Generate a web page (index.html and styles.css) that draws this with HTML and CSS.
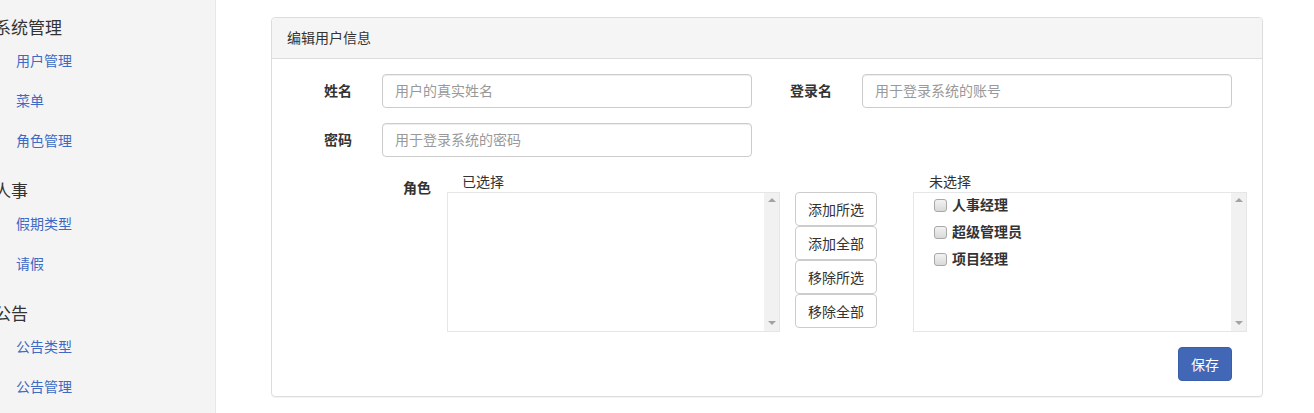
FILE: index.html
```html
<!DOCTYPE html>
<html lang="zh-CN">
<head>
<meta charset="utf-8">
<title>编辑用户信息</title>
<link rel="stylesheet" href="styles.css">
</head>
<body>
<div class="layout">
  <aside class="sidebar">
    <div class="group">
      <div class="group-title">系统管理</div>
      <a class="nav-link" href="#">用户管理</a>
      <a class="nav-link" href="#">菜单</a>
      <a class="nav-link" href="#">角色管理</a>
    </div>
    <div class="group">
      <div class="group-title">人事</div>
      <a class="nav-link" href="#">假期类型</a>
      <a class="nav-link" href="#">请假</a>
    </div>
    <div class="group">
      <div class="group-title">公告</div>
      <a class="nav-link" href="#">公告类型</a>
      <a class="nav-link" href="#">公告管理</a>
    </div>
  </aside>
  <main class="main">
    <section class="panel">
      <div class="panel-heading">编辑用户信息</div>
      <div class="panel-body">
        <div class="form-row">
          <label class="lbl">姓名</label>
          <input class="ctl" type="text" placeholder="用户的真实姓名">
          <label class="lbl">登录名</label>
          <input class="ctl" type="text" placeholder="用于登录系统的账号">
        </div>
        <div class="form-row">
          <label class="lbl">密码</label>
          <input class="ctl" type="password" placeholder="用于登录系统的密码">
        </div>
        <div class="role-row">
          <label class="lbl role-lbl">角色</label>
          <div class="list-col list-left">
            <div class="list-caption">已选择</div>
            <div class="listbox">
              <div class="list-items"></div>
              <div class="sbar"><span class="arr up"></span><span class="arr down"></span></div>
            </div>
          </div>
          <div class="btn-col">
            <button class="btn">添加所选</button>
            <button class="btn">添加全部</button>
            <button class="btn">移除所选</button>
            <button class="btn">移除全部</button>
          </div>
          <div class="list-col list-right">
            <div class="list-caption cap-right">未选择</div>
            <div class="listbox">
              <div class="list-items">
                <label class="item"><input class="cb" type="checkbox"><span>人事经理</span></label>
                <label class="item"><input class="cb" type="checkbox"><span>超级管理员</span></label>
                <label class="item"><input class="cb" type="checkbox"><span>项目经理</span></label>
              </div>
              <div class="sbar"><span class="arr up"></span><span class="arr down"></span></div>
            </div>
          </div>
        </div>
        <div class="actions">
          <button class="btn-primary">保存</button>
        </div>
      </div>
    </section>
  </main>
</div>
</body>
</html>
```
FILE: styles.css
```css
* { box-sizing: border-box; }
html, body { margin: 0; padding: 0; }
body {
  font-family: "Liberation Sans", "Noto Sans CJK SC", sans-serif;
  font-size: 14px;
  line-height: 20px;
  color: #333;
  background: #fff;
}
.layout {
  display: flex;
  min-height: 100vh;
}
.sidebar {
  width: 216px;
  flex: 0 0 216px;
  background: #f4f4f4;
  border-right: 1px solid #e8e8e8;
  overflow: hidden;
  padding-top: 17px;
}
.group + .group { margin-top: 19px; }
.group-title {
  font-size: 17px;
  line-height: 24px;
  margin-left: -6px;
  color: #333;
}
.nav-link {
  display: block;
  padding: 10px 0 10px 16px;
  line-height: 20px;
  color: #3d6ac4;
  text-decoration: none;
}
.main {
  flex: 1;
  padding: 17px 51px 0 55px;
}
.panel {
  width: 992px;
  border: 1px solid #ddd;
  border-radius: 4px;
  box-shadow: 0 1px 1px rgba(0,0,0,0.05);
}
.panel-heading {
  background: #f5f5f5;
  border-bottom: 1px solid #ddd;
  border-radius: 3px 3px 0 0;
  padding: 10px 15px;
  line-height: 20px;
  font-size: 14px;
  color: #333;
}
.panel-body {
  padding: 15px 30px 15px 0;
}
.form-row {
  display: grid;
  grid-template-columns: 80px 370px 50px 370px;
  column-gap: 30px;
  align-items: center;
  margin-bottom: 15px;
}
.lbl {
  text-align: right;
  font-weight: bold;
  color: #333;
  white-space: nowrap;
}
.ctl {
  height: 34px;
  width: 370px;
  border: 1px solid #ccc;
  border-radius: 4px;
  padding: 6px 12px;
  font-family: inherit;
  font-size: 14px;
  color: #555;
  box-shadow: inset 0 1px 1px rgba(0,0,0,0.075);
  outline: none;
}
.ctl::placeholder { color: #999; }
.role-row {
  display: flex;
  align-items: flex-start;
}
.role-row > * { flex: none; }
.role-lbl {
  width: 159px;
  padding-top: 6px;
}
.list-col { width: 333px; }
.list-left { margin-left: 16px; }
.list-right { margin-left: 36px; width: 334px; }
.list-caption {
  line-height: 20px;
  padding-left: 15px;
}
.cap-right { padding-left: 16px; }
.listbox {
  height: 140px;
  border: 1px solid #e6e6e6;
  display: flex;
}
.list-items {
  flex: 1;
  padding: 2px 0 0 20px;
}
.sbar {
  width: 15px;
  background: #f1f1f1;
  position: relative;
}
.arr {
  position: absolute;
  left: 4px;
  width: 0;
  height: 0;
  border-left: 4px solid transparent;
  border-right: 4px solid transparent;
}
.arr.up { top: 5px; border-bottom: 4px solid #a3a3a3; }
.arr.down { bottom: 6px; border-top: 4px solid #a3a3a3; }
.item {
  display: flex;
  align-items: center;
  height: 20px;
  margin-bottom: 7px;
  font-weight: bold;
  color: #333;
}
.cb {
  appearance: none;
  -webkit-appearance: none;
  width: 13px;
  height: 13px;
  margin: 0 5px 0 0;
  border: 1px solid #a8a8a8;
  border-radius: 3px;
  background: linear-gradient(#f2f2f2, #d9d9d9);
}
.btn-col {
  margin-left: 15px;
  margin-top: 20px;
  width: 82px;
  display: flex;
  flex-direction: column;
}
.btn {
  height: 34px;
  width: 82px;
  border: 1px solid #ccc;
  border-radius: 4px;
  background: #fff;
  color: #333;
  font-family: inherit;
  font-size: 14px;
  padding: 0;
}
.actions {
  display: flex;
  justify-content: flex-end;
  margin-top: 15px;
}
.btn-primary {
  height: 34px;
  width: 54px;
  border: 1px solid #3a5ea8;
  border-radius: 4px;
  background: #4267b7;
  color: #fff;
  font-family: inherit;
  font-size: 14px;
  padding: 0;
}
```
